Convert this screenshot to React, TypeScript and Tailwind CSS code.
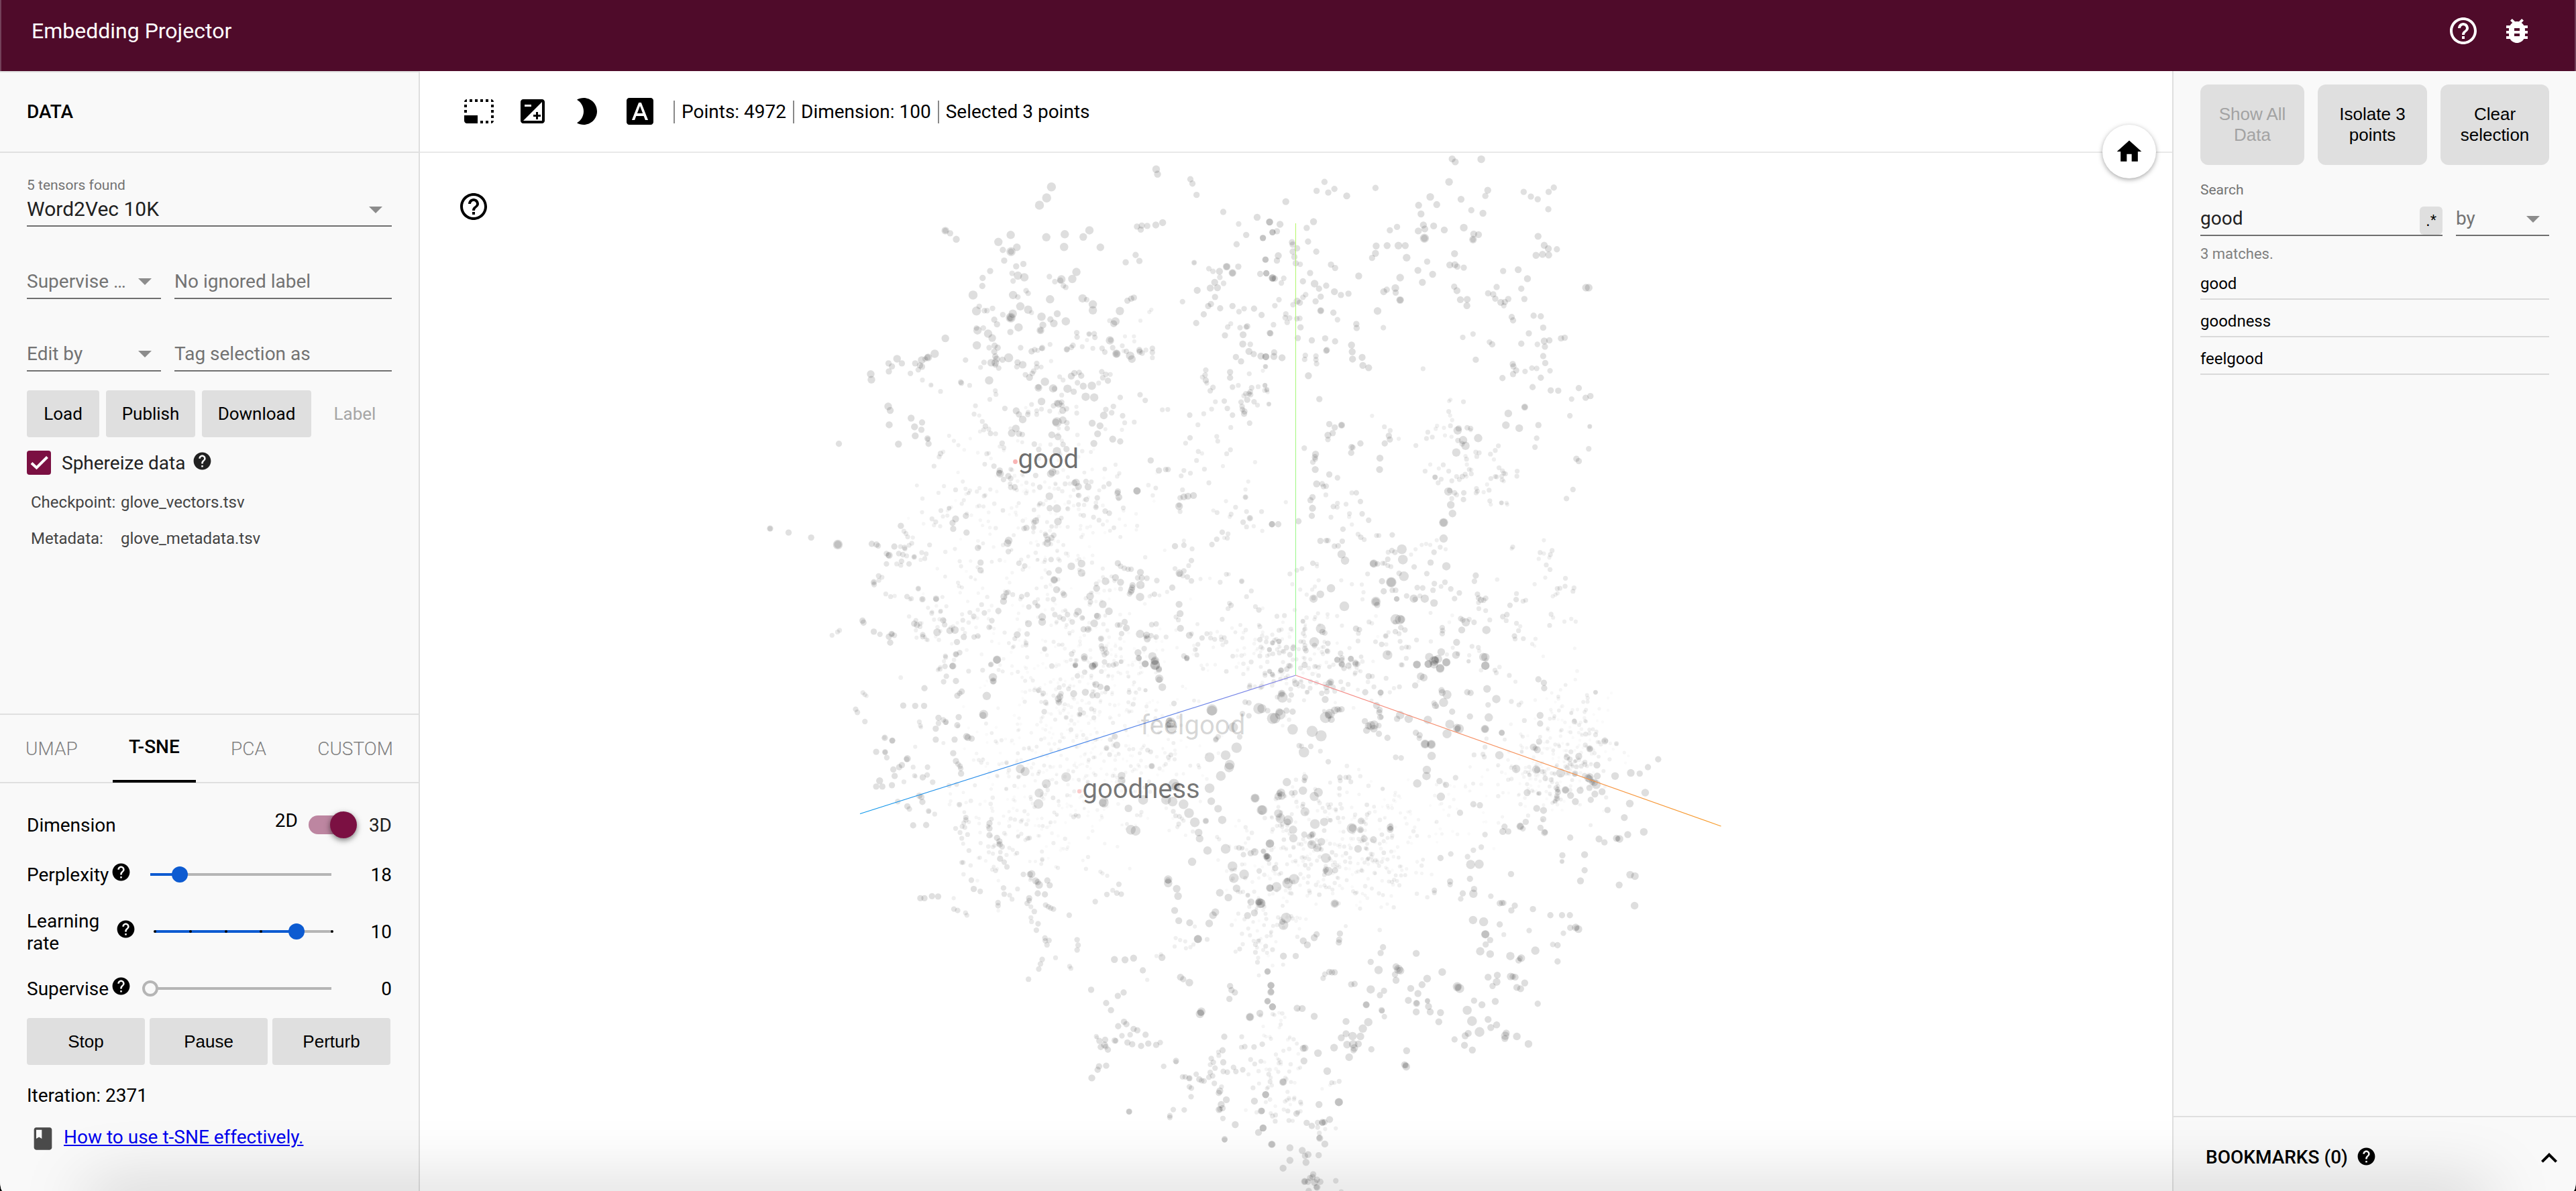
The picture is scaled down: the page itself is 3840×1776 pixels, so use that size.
import React from "react";
import {
  MdArrowDropDown,
  MdBook,
  MdBrightness2,
  MdBugReport,
  MdExpandLess,
  MdExposure,
  MdFontDownload,
  MdHelp,
  MdHelpOutline,
  MdHome,
  MdPhotoSizeSelectSmall,
} from "react-icons/md";

type Point = { x: number; y: number; r: number; o: number };

/* Projected points, stored per tile as "x,y,r" in tile units. */
const TILES: { ox: number; oy: number; sx: number; sy: number; data: string }[] = [
  {
    ox: 1100,
    oy: 220,
    sx: 1.96,
    sy: 2.01,
    data: `1222,65,11 1226,80,10 1322,95,9 1328,108,9 1340,142,9 916,118,13 902,151,13 881,173,13 606,249,11 606,249,8 620,257,9 638,275,10
1166,237,9 1180,234,9 1177,246,9 1196,235,9 1221,232,10 1241,225,10 1418,193,9 1463,229,8 1517,209,10 1553,223,10 1485,262,9 1534,271,9 1562,254,9 1457,290,9
797,262,12 761,283,12 815,299,11 798,312,13 798,312,9 774,307,9 778,339,9 901,269,12 955,260,12 953,298,12 1027,248,12 1009,268,11 1059,299,11 834,349,9 813,356,9
1162,322,9 1173,340,9 1133,344,9 1333,345,8 1333,345,6 1428,357,11 1428,357,9 1445,376,11 1445,376,9 1462,357,9 1376,363,8 1388,371,8 1407,371,10 1408,389,8 1393,404,10 1380,421,10 1401,420,10 1419,407,8 1542,336,9 1526,379,9 1544,377,9 1562,391,11
737,370,9 715,391,9 714,415,9 801,377,8 818,384,12 837,389,12 804,400,8 804,442,12 818,448,8 842,429,8 848,437,8 687,442,13 910,387,8 926,402,8 945,395,12 942,399,9 951,414,8 958,419,8 977,394,12 989,373,12 912,455,12 1007,452,12 1019,456,8 1037,470,12 1037,488,12 1138,459,9 1149,453,9 1157,450,9 1342,428,10 1299,462,8 1394,448,9 1382,469,9 1374,475,9 1361,500,9 1445,475,9 1409,482,9 1464,492,8 1479,483,8 1508,483,9 1530,502,9 1339,526,9
697,490,13 705,476,8 720,489,8 728,489,8 744,482,8 774,501,8 803,498,12 797,510,14 797,510,11 795,512,8 825,476,12 848,486,12 858,495,7 887,507,12 913,515,9 923,527,11 933,498,10 958,521,12 1116,490,12 1103,521,12 1098,528,10 1086,519,7 1202,493,6 1208,486,6 1176,519,6 749,516,9 757,530,9 884,548,11 884,548,8 891,532,10 820,539,12 796,553,9 700,548,12 697,541,8 717,541,8 731,558,12 743,571,11 606,572,11 698,593,12 734,600,8 750,594,9 759,600,9 749,612,9 752,626,9 756,634,10 752,645,11 740,645,11 773,636,9 791,630,13 762,661,8 752,652,8 719,644,8 709,659,7 817,644,9 815,657,8 832,651,11 665,637,8
575,618,12 556,629,11 554,629,9 537,637,11 547,634,8 518,647,9 532,653,9 538,657,9 527,666,8 504,677,8 465,633,11 440,647,9 450,656,9 441,671,9 479,647,9 388,679,11 390,696,11 539,697,7 564,712,7 565,712,5 592,731,7 651,703,8 653,706,8 677,713,7 734,698,12 752,729,7 754,740,7 736,755,7
439,776,11 445,788,10 442,831,10 506,811,10 516,837,10 538,824,9 536,846,9 518,864,10 554,872,9 555,874,7 557,888,9 469,889,10 295,888,9 617,864,6 631,879,6 644,892,6 592,917,8 600,912,6 588,927,7 573,955,7
826,600,8 858,611,9 867,606,8 889,601,9 888,602,7 912,590,7 876,608,7 979,593,8 961,605,9 961,605,7 974,599,8 1006,597,7 990,555,8 991,568,8 1026,559,8 1026,559,6 1041,558,8 1043,569,8 1020,577,6 1087,578,12 1089,577,8 1131,566,6 1157,566,6 1158,581,6 1037,602,7 1064,602,8 1095,600,8 1123,594,7 1106,618,12 1106,618,10 1105,618,6 1072,613,8 1127,610,6 1135,611,8 1146,624,12 1151,634,11 1173,607,9 1174,612,9 1181,616,8 1192,607,7 1211,602,8 1211,614,8 1211,630,7 915,640,6 873,647,8 873,658,8 886,658,7 864,670,8 860,677,8 840,681,8 852,689,10 940,687,7 950,697,7 974,685,10 983,676,9 997,674,8 1003,684,9 1063,672,8 1075,680,8 1088,680,7 1066,690,8 1081,699,9 1054,706,7 992,705,8 897,702,12 878,720,11 878,718,8 921,722,12 925,723,8 963,723,12 981,732,9 1009,715,10 1034,714,12 1041,749,12 1016,747,12 946,742,7 1117,749,8 1175,741,8 1190,758,8 887,761,11 937,768,11 932,766,9 946,763,8 947,773,8 949,788,10 960,783,8 813,789,10 821,800,9 832,815,11 847,800,8 780,782,8 858,770,7 848,793,7 873,789,7 873,800,7 887,784,7 911,790,7 922,774,8 989,777,6 990,796,7 1069,803,11 1075,785,8 1092,795,8 1097,776,8 1124,804,8 1130,825,7 1158,823,7 932,823,14 929,823,10 949,817,11 961,825,8 962,842,8 1035,826,10 1058,834,10 1051,858,10 1040,887,10 1095,874,10 1117,881,9 1122,846,6 694,774,7 690,799,7 705,803,6 714,821,7 723,835,8 718,846,7 733,844,7 738,857,8 753,858,7 812,842,11 800,856,11 821,858,9 831,860,8 917,861,10 935,867,10 866,889,8 772,886,8 765,896,6 777,900,7 727,918,7 733,916,6 748,955,8 765,968,9 763,975,9 766,978,11 776,995,8 790,985,9 797,992,8 797,1018,8 809,1018,9 950,890,8 932,910,12 960,904,9 879,905,8
919,973,11 914,978,11 870,983,8 882,1018,8 988,1004,11 983,1005,9 995,1016,10 1017,1001,8 1023,1017,10 956,1008,7 1166,1029,11 1166,1029,10 1110,1031,9 1109,1036,9 1113,1048,10 1084,1008,8 1069,1017,7 996,1043,8 1018,1055,8 1050,1050,8 910,1045,11 932,1082,12 911,1081,9 935,1121,11 870,1119,10 865,1124,8 864,1139,8 843,1140,9 836,1142,8 1046,1078,8 1073,1090,8 1085,1096,8 1126,1080,7 1055,1117,7 1039,1108,7 1010,1103,7 995,1070,7 964,1083,7 602,1015,6 636,1026,7 657,1001,6 665,1023,6 678,1028,6 706,1021,6 586,1035,6 660,1057,6 723,1042,6 617,1081,7 617,1081,6 593,1088,7 612,1103,6 599,1106,6 636,1113,10 666,1104,9 627,1125,9 629,1143,9 668,1154,9 567,1113,7 578,1122,7 591,1135,6 573,1132,6 538,1093,6 94,1142,9 94,1142,7 148,1154,9 214,1169,9 292,1190,14 292,1190,11 391,1188,9 405,1190,9 410,1194,8 476,1134,9 485,1150,7 491,1157,7 496,1167,7 511,1169,6 457,1196,9 475,1196,7 487,1199,8 508,1186,7 500,1192,7 560,1191,7 434,1217,8 442,1222,10 440,1222,8 434,1248,8 470,1217,8 482,1220,8 493,1224,7 478,1240,8 464,1248,7 476,1252,7 500,1248,8 515,1227,8 515,1227,6 537,1214,7 550,1218,7 546,1232,7 534,1236,6 488,1203,7 1206,938,9 1230,968,9 1250,965,8 1257,965,8 1240,786,7 1256,785,7 1320,802,8 1344,831,7 1361,798,7 1321,870,8 1308,886,7 1399,866,7 1402,880,7 1440,839,7 1345,911,7 1356,917,6 1340,938,7 1322,976,7 1303,968,7 1295,984,7 1363,964,7 1376,1005,7 1439,906,7 1428,918,7 1417,955,6 1511,943,6 1299,1026,7 1292,1050,8 1303,1047,10 1315,1045,10 1331,1043,10 1289,1075,11 1292,1091,7 1289,1072,7
1367,667,8 1365,682,8 1357,688,7 1367,698,9 1370,706,7 1388,719,8 1380,729,8 1395,762,7 1421,760,8 1384,784,7 1430,782,8 1438,673,9 1438,690,9 1445,718,8 1462,713,7 1455,628,9 1470,641,9 1494,678,7 1475,589,10 1497,590,8 1493,611,10 1507,619,9 1528,625,10 1542,627,10 1476,561,10 1488,536,9 1485,538,8 1467,540,8 1431,538,8 1440,528,7 1423,563,9 1554,556,9 1501,720,8 1497,732,8 1493,738,8 1498,741,8 1484,738,8 1478,744,7 1488,756,9 1470,763,8 1508,762,8 1473,776,8 1474,785,8 1480,791,9 1479,798,9 1445,802,8 1518,772,7 1520,717,7 1542,657,7 1551,769,7 1495,826,8 1540,713,7 1545,727,7 1566,626,10
788,1186,11 791,1178,11 790,1211,8 701,1200,9 634,1203,6 648,1240,6 652,1255,6 709,1244,9 709,1267,9 905,1175,9 900,1163,8 923,1162,8 904,1186,11 916,1170,9 898,1158,7 974,1255,11 1004,1247,11 1004,1275,11 937,1267,10 924,1296,11 924,1296,9 909,1275,8 821,1246,8 838,1254,8 915,1235,8 931,1325,10 953,1341,9 950,1336,8 922,1354,8 1029,1345,11 1030,1362,8 1048,1321,10 1047,1308,7 1074,1300,11 1103,1289,10 1118,1303,10 1100,1299,6 1110,1246,9 1118,1255,8 1129,1261,8 1140,1264,8 1149,1264,8 1176,1273,10 1168,1290,8 1180,1290,9 1195,1291,8 1224,1298,8 1176,1311,12 1153,1312,9 1152,1319,9 1150,1326,10 1148,1332,9 1144,1338,8 1118,1323,7 1175,1347,12 1203,1345,6 1217,1339,8 1254,1332,6 1269,1319,9 1247,1207,5 1277,1195,9 1303,1192,8 1303,1178,6 1327,1203,7 1415,1153,8 1399,1174,8 1385,1190,8 1432,1158,7 1430,1171,7 1421,1170,6 1325,1238,8 1317,1253,7 1290,1276,11 1290,1278,8 1303,1269,8 1277,1262,7 1313,1287,8 1325,1299,8 1300,1284,7 1427,1279,7 1434,1279,6 1409,1303,7 1379,1291,5 1472,1300,8 1472,1300,6 1500,1329,7 1486,1346,7 1436,1366,7 1441,1372,8 1432,1382,7 1512,1376,7 1522,1386,8 1415,1414,7 1525,1436,7 1525,1475,8 1528,1497,7 1525,1524,7 1561,1485,7 1553,1505,7 1560,1129,9 1530,1091,7 1486,1091,7 1496,1111,9 1496,1111,6 1476,1123,8 1486,1137,7 1507,1135,6 1532,1149,6 1483,1048,8 1483,1048,6 1483,1025,6 1491,1001,6 1426,1060,6 1454,1078,7 1441,1099,7 1437,1107,6 1389,1088,6 1400,1094,7
411,1284,8 421,1288,7 412,1297,7 397,1303,9 397,1303,6 398,1310,8 432,1338,7 446,1346,7 458,1344,6 494,1346,8 507,1352,7 503,1354,6 527,1322,8 527,1322,6 539,1354,9 539,1354,6 579,1352,9 579,1354,8 643,1304,6 646,1315,6 609,1375,6 712,1370,7 720,1395,8 689,1405,8 761,1389,9 742,1418,8 734,1438,8 738,1438,6 776,1360,10 777,1346,10 784,1335,8 789,1333,8 803,1340,7 829,1346,8 845,1340,8 868,1364,8 850,1377,8 876,1374,8 876,1374,6 889,1407,11 889,1422,11 849,1427,10 926,1400,8 940,1408,8 951,1413,8 963,1400,8 977,1422,8 994,1391,11 988,1400,8 1006,1410,8 1066,1369,11 1084,1390,11 1051,1405,10 1048,1403,8 1041,1426,11 1023,1444,10 1010,1444,9 1061,1472,9 1061,1472,6 1130,1422,9 1116,1431,8 1109,1431,8 1135,1440,10 1121,1457,8 1175,1458,12 1194,1461,10 1196,1473,10 1194,1466,7 1209,1430,8 1222,1428,8 1207,1463,8 1222,1467,8 1251,1467,7 1289,1369,10 1292,1397,10 1293,1441,10 1319,1462,10 1280,1407,7 1287,1416,7 1356,1470,8 1370,1457,7 1381,1470,7 1381,1456,6 1393,1474,7 1413,1475,7 1421,1469,7 1344,1489,7 1336,1505,7 1341,1521,7 1303,1524,8 1311,1530,8 1312,1533,7
364,1418,9 367,1424,9 397,1451,9 415,1459,8 441,1466,9 449,1458,9 450,1458,7 457,1462,8 445,1484,9 515,1427,9 523,1431,9 532,1427,7 532,1436,7 520,1447,6 540,1460,8 540,1466,8 522,1469,6 582,1453,11 619,1448,10 634,1446,11 600,1417,9 602,1417,6 604,1430,8 573,1415,6 589,1414,6 657,1417,7 655,1399,6 640,1482,9 660,1467,9 690,1467,8 701,1464,8 275,1462,7 291,1452,7 297,1447,7 606,1524,7 637,1519,9 637,1519,7 648,1514,8 628,1554,10 591,1557,6 757,1535,12 740,1549,8 816,1460,10 809,1472,7 845,1458,8 842,1485,7 842,1491,7 896,1503,8 896,1503,6 948,1490,6 1012,1526,10 975,1518,8 1062,1494,8 1064,1502,8 1073,1504,8 1071,1520,8 1077,1515,8 1044,1549,9 1036,1554,10 986,1552,8 984,1554,6 1105,1548,8 1084,1552,7 1119,1541,6 1169,1514,10 1187,1502,8 1171,1530,9 1190,1547,10 1211,1525,12 1217,1540,11 1219,1552,14 1230,1562,9`,
  },
  {
    ox: 1880,
    oy: 220,
    sx: 1.96,
    sy: 2.01,
    data: `558,34,10 567,43,10 643,35,11 549,103,11 185,103,9 162,130,9 196,135,9 214,124,9 250,145,10 334,121,9 72,162,10 494,148,11 460,173,10 467,199,10 513,171,10 584,155,10 614,188,9 655,145,9 662,128,10 648,197,10 767,133,9 788,147,9 808,155,9 840,133,9 855,120,9 839,185,9
25,223,10 55,230,10 46,251,9 33,254,9 5,271,9 153,222,10 133,241,9 137,282,9 161,312,9 90,284,9 92,291,9 105,302,9 92,312,9 97,328,9 101,347,9 114,350,8 12,336,9 46,339,9 50,324,10 376,248,9 397,238,9 459,250,10 474,232,10 478,244,10 477,272,13 477,272,10 504,235,10 535,247,10 592,240,11 621,259,10 635,261,10 619,276,11 619,276,8 809,266,10 827,293,10 839,303,10 864,305,9 803,323,10 822,320,10 840,322,10 336,295,10 368,294,10 401,294,11 421,294,10 334,317,10 324,331,9 425,330,11 565,318,10 485,342,9 551,352,10 566,351,10 573,357,9 592,360,9 458,368,10 501,380,10 471,404,10 204,351,9 216,361,9 285,385,10 406,390,11 751,366,10 707,370,9 778,393,10 143,376,9 122,401,9 156,408,11 169,423,9 190,414,9 214,432,10 233,442,9 255,438,9 174,447,9 159,461,9 130,441,8 122,449,8 105,460,10 113,465,9 93,471,8 66,392,8 59,406,8 33,391,10 34,393,8 40,393,9 15,377,9 52,456,8 40,474,8 174,489,10 174,489,8 211,495,9 223,516,8 72,499,8 70,510,8 83,511,8 76,524,8 104,513,8 113,512,8 36,531,8 27,557,9 115,539,9 107,571,9 148,578,9 187,572,9 216,581,9 192,607,9 190,609,9 278,529,9 279,541,9 264,592,10 266,612,10 267,634,10 295,629,10 297,653,10 314,660,10 340,490,11 357,540,8 358,432,10 367,426,9 392,421,11 393,435,9 406,457,11 406,457,9 564,417,9 572,429,10 582,456,10 602,455,10 601,474,10 688,418,9 663,437,9 678,440,9 684,453,9 700,464,10 712,463,9 722,454,9 709,474,8 760,423,9 769,454,9 949,420,11 957,420,11 796,504,9 817,506,9 732,508,9 736,518,9 824,540,9 782,557,9 807,590,8 827,580,10 842,578,9 829,597,9 824,625,9 830,646,9 805,662,8 791,661,8 844,669,8 817,690,9 771,671,8 735,649,9 737,656,9 745,668,9 736,679,9 705,691,9 589,569,8 619,559,8 667,583,8 675,590,9 760,588,9 627,636,9 473,663,7 876,572,9 887,570,9 793,718,9 846,728,9 868,729,9 928,721,9 962,745,9 948,750,9 907,754,8
38,614,9 14,627,10 61,630,10 129,623,8 127,635,8 160,625,8 160,636,8 162,648,8 12,656,7 138,684,10 170,754,9 5,669,6 11,713,7 17,725,7 10,728,7 19,733,6 23,769,6 324,804,6 770,778,10 770,778,8 722,797,11 715,832,11 754,841,11 810,832,9 805,871,8 800,898,8 902,804,8 960,836,7 960,836,6 957,903,8 921,933,9 928,940,9 911,1025,8 892,1052,8 199,829,9 215,839,9 235,832,10 235,832,8 209,856,9 195,862,10 195,875,8 126,901,8 159,919,10 157,928,9 158,934,8 151,943,8 158,965,10 264,898,9 268,899,8 290,887,9 263,915,9 360,837,7 377,848,7 373,864,9 376,875,9 361,887,9 402,873,6 347,931,10 346,965,10 199,980,9 223,990,8 162,1008,10 178,1008,8 182,1016,8 190,1015,8 189,1041,7 150,1048,9 144,1057,9 150,1081,10 148,1104,9 223,1066,7 211,1076,8 222,1078,7 248,1069,7 265,1035,7 278,1035,8 290,1061,8 258,1097,7 257,1107,6 204,1108,7 295,1098,8 314,1117,8 265,1130,6 239,1144,8 237,1180,8 283,1159,7 291,1168,8 301,1175,7 337,1163,7 344,1163,7 383,1161,8 173,1179,9 190,1178,8 195,1178,8 214,1195,8 225,1194,8 235,1219,12 245,1238,12 32,1129,9 50,1129,9 109,1120,9 72,1063,6 549,760,6 553,756,6 591,762,7 548,791,7 552,803,6 558,817,6 574,848,12 577,842,9 553,834,7 534,840,6 514,834,6 510,843,6 487,853,7 483,872,7 500,868,7 537,863,6 556,867,6 452,893,7 602,840,8 612,842,8 612,847,6 590,877,12 597,894,12 587,888,8 575,878,8 634,871,12 570,914,12 597,925,6 600,934,7 601,950,6 627,913,7 637,915,7 630,926,7 670,919,7 684,908,7 693,894,7 680,935,6 494,950,6 532,951,7 519,962,6 479,970,7 548,970,7 508,988,8 508,988,7 526,994,7 517,1005,7 557,999,7 571,986,7 579,995,7 588,986,8 596,979,7 600,986,6 608,965,7 614,966,6 614,978,7 547,1031,12 551,1028,8 565,1035,8 571,1041,7 592,1035,8 591,1055,8 557,1052,7 554,1071,11 559,1097,11 533,1124,13 533,1124,11 533,1172,12 629,1022,7 632,1030,7 628,1035,7 650,1033,6 666,1027,7 660,1010,6 671,992,7 684,986,7 688,987,7 695,960,7 705,969,7 709,976,7 714,978,7 703,985,7 704,996,7 709,1000,6 748,970,7 747,985,7 668,1059,7 671,1070,6 702,1065,7 702,1065,6 717,1065,6 719,1070,6 411,1204,14 414,1235,14 417,1285,14 380,1303,15 380,1303,13 371,1213,7 382,1208,8 391,1213,8 370,1234,8 438,1220,6 451,1204,6 469,1191,6 482,1188,6 494,1191,6 513,1177,6 523,1198,7 539,1204,6 505,1213,8 495,1244,9 541,1255,12 447,1257,8 484,1277,8 329,1247,12 328,1247,10 340,1248,8 355,1246,7 361,1246,7 370,1253,7 379,1256,7 735,1197,7 732,1202,6 826,1177,6 815,1214,7 826,1217,6 811,1233,6 850,1208,7 845,1220,7 842,1229,6 833,1251,7 844,1265,7 830,1289,6 799,1309,6 889,1291,7 888,1315,7 914,1320,7 911,1330,7 873,1321,7 865,1322,7 866,1336,6 860,1340,6 852,1345,6 746,1337,7 745,1355,8 765,1360,7 773,1357,7 727,1372,8 718,1400,8 706,1406,8 716,1418,7 746,1426,7 757,1435,6 752,1448,7 740,1464,8 742,1473,7 766,1472,7 847,1399,7 853,1409,6 886,1421,6 906,1413,6 919,1421,6 792,1488,6 799,1494,5 824,1525,5 916,1501,5
151,1246,8 163,1248,6 163,1255,6 119,1262,7 104,1267,7 84,1278,7 91,1309,6 168,1297,6 204,1321,12 173,1339,11 153,1352,12 153,1350,7 114,1325,6 133,1340,6 149,1325,6 157,1316,6 234,1297,6 265,1309,6 294,1310,6 299,1333,6 296,1354,6 311,1278,7 353,1300,9 358,1330,9 383,1327,8 393,1327,8 403,1276,8 335,1361,14 335,1361,11 339,1371,9 396,1353,8 396,1353,8 425,1344,8 446,1352,12 450,1354,8 464,1344,7 478,1352,12 505,1365,11 456,1319,8 472,1320,8 502,1327,8 506,1307,8 537,1303,8 554,1323,8 579,1335,8 565,1352,8 627,1283,9 623,1300,8 632,1339,8 635,1350,8 642,1356,9 650,1357,8 656,1351,8 635,1364,7 636,1382,7 656,1388,7 668,1416,7 243,1375,14 393,1414,15 405,1415,14 410,1414,11 174,1442,14 179,1452,9 186,1455,8 155,1482,14 156,1493,8 369,1521,14 315,1422,7 277,1442,9 287,1445,8 284,1456,7 236,1433,6 194,1399,6 222,1404,6 166,1396,6 158,1407,6 122,1420,7 122,1420,6 98,1386,6 68,1403,7 46,1405,7 52,1447,7 123,1456,7 52,1480,8 52,1480,7 34,1484,7 195,1486,8 408,1439,8 420,1446,8 392,1451,8 403,1457,7 364,1464,8 364,1464,6 372,1453,6 406,1480,7 424,1497,7 411,1500,7 352,1489,8 454,1476,7 424,1531,7 529,1439,8 530,1448,8 529,1457,8 586,1446,10 598,1423,12 583,1412,8 589,1416,8 608,1414,7 622,1423,8 658,1446,12 571,1483,10 569,1521,11 616,1495,7 526,1512,11 491,1527,12 517,1533,12 508,1537,12 505,1549,12 541,1543,11 489,1548,11 523,1560,12 455,1549,11 649,1527,12 655,1553,12 606,1540,6 608,1522,6 412,1551,7 94,1500,9 74,1499,8 66,1511,7 84,1520,8 53,1515,7 24,1505,7 128,1492,7 128,1502,8 131,1508,8 194,1510,8 232,1516,8 222,1535,8 236,1530,8 235,1547,9 262,1532,8 276,1548,9 282,1548,8 258,1500,6 283,1479,7 327,1540,5 85,1554,8 58,1566,8 242,1561,8`,
  },
  {
    ox: 1100,
    oy: 980,
    sx: 1.96,
    sy: 1.97,
    data: `757,8,11 607,0,7 602,12,6 627,26,9 605,27,8 591,35,7 584,38,6 609,56,8 601,72,8 637,70,9 674,41,7 715,38,7 738,22,7 745,59,12 746,70,10 746,71,8 654,101,9 648,106,8 641,113,9 545,91,9 365,104,7 371,110,7 376,114,6 344,153,8 349,162,8 371,189,8 483,142,9 518,143,9 544,143,9 727,114,12 718,168,13 716,171,10 586,178,9 600,184,8 607,190,9 608,192,7 641,200,9 645,176,9 586,194,8 578,210,9 578,242,9 530,190,7 533,201,7 535,206,6 633,242,9 668,233,10 672,236,10 683,239,9 451,245,9 451,245,8 429,237,9 428,236,6 404,278,9 430,278,8 430,280,8 435,295,8 495,298,10 493,300,8 479,317,9 471,323,9 454,330,9 458,349,9 512,323,7 518,263,6 516,348,7 519,350,6 554,323,8 553,346,8 540,353,9 569,367,8 485,366,7 629,282,9 637,305,9 643,314,8 649,320,8 651,327,8 652,342,9 414,363,10 404,380,9 422,380,9 450,376,9 617,377,7 639,374,7 530,407,9 536,411,9 539,425,9 467,424,8 495,438,9 501,446,8 557,452,8 558,453,6 575,461,7 550,493,9 512,494,9 647,433,8 647,433,5 666,471,8 666,478,8 660,487,7 636,503,7 655,497,7 663,500,7 649,515,7 654,532,7 671,521,7 735,488,9 735,503,9 735,523,9 757,531,9 764,541,9 765,550,9 762,548,7 772,557,8 675,568,7 654,603,7 658,603,7 709,546,6 707,589,6 733,573,6 745,577,6 766,592,9 778,602,8 786,616,8 753,627,7 743,624,6 682,655,8 689,681,9 708,688,8 776,678,8 778,696,8 794,699,7 801,711,7 817,681,7 760,721,8 760,730,8 533,708,9 545,708,9 567,702,9 585,703,9 631,740,8 642,744,8 665,751,7 669,758,7 834,638,8 853,638,9 858,637,11 870,657,10 876,661,9 880,669,11 904,656,9 911,670,9 897,697,9 876,694,9 851,708,9 851,715,8 845,723,8 856,733,7 866,747,8 856,765,7 858,777,7 877,783,8 872,802,8 899,728,8 907,733,8 914,737,8 922,740,8 968,758,8 897,825,8 898,833,8 909,832,8 903,845,8 991,830,8 994,846,8 991,860,8 928,883,7 889,888,8 884,901,8 879,916,8 849,946,8 969,908,7 973,914,7 1032,977,9 1110,995,9 1127,985,9 1076,1016,9 1090,1037,9 1128,1071,9 1135,1078,9 1111,1084,9 1156,1092,9 1167,1096,9 1146,1109,8 1191,1109,9 1122,1112,8 1047,1114,7 1049,1117,6 1056,1127,9 1073,1124,9 1071,1139,10 1075,1144,8 1060,1145,9 1081,1153,9 1101,1126,9 1104,1127,8 1138,1132,9 1152,1137,9 1178,1142,9 1199,1135,9 1222,1139,9 1234,1132,8 1076,1200,9 1055,1202,9 1051,1212,9 1034,1236,10 1143,1335,9 1143,1335,8 1244,1202,8 1280,1186,9 1280,1189,7 1262,1347,8 1262,1352,8 1272,1329,8 1304,1330,8 1319,1262,8 1325,1266,8 1324,1291,8 1299,1233,8 1307,1233,8 1319,1237,9 1319,1237,7 1339,1225,8 1348,1240,9 1355,1244,8 1362,1245,8 1376,1234,8 1387,1230,8 1380,1220,8 1394,1207,8 1389,1190,8 1383,1179,8 1380,1197,7 1404,1160,7 1405,1170,7 1416,1155,9 1418,1190,9 1418,1217,8 1430,1219,8 1448,1205,8 1455,1217,8 1475,1212,8 1421,1115,9 1472,1115,7 1471,1146,7 1481,1144,8 1508,1145,8 1532,1137,8 1436,1004,9 1452,985,9 1442,978,9 1438,966,9 1392,1252,8 1408,1274,10 1405,1280,9 1413,1262,7 1412,1314,10 1416,1325,9 1406,1329,10 1408,1328,8 1427,1300,10 1417,1355,8 1453,1373,10 1422,1416,9 1422,1418,8 1542,1285,10 1509,1304,10 1529,1333,10 1534,1383,10 1521,1396,10 1559,1431,10 1505,1265,7 1498,1182,7 1510,1195,7 1528,1187,7 1354,1041,12 1350,1048,12 1352,1044,10 1496,1057,12 1496,1057,10 1525,1046,10 1548,1010,9 1557,984,10 1557,964,10 1562,1027,10 1547,924,9
1100,888,10 1131,889,10 1156,884,10 1239,882,10 1223,878,6 1236,873,6 1183,920,9 1196,948,6 1293,940,10 1301,946,9 1319,956,11 1344,828,12 1344,828,11 1320,780,10 1288,774,10 1276,744,10 1286,702,11 1282,680,11 1257,653,12 1257,664,12 1257,656,9 1327,601,12 1372,568,12 1349,533,11 1346,515,11 1335,485,14 1318,458,14 1302,432,14 1270,424,14 1251,419,14 1184,419,14 1141,444,11 1069,427,14 1066,428,11 1148,507,14 1162,510,14 1121,348,11 1121,362,11 1274,374,16 1280,380,13 1209,320,9 1209,320,7 1378,294,14 1425,288,14 1457,266,15 1437,316,14 1435,324,14 1411,349,14 1378,385,14 1383,423,11 1403,445,11 1415,478,12 1367,481,9 1367,481,7 1511,414,13 1511,414,11 1530,449,14 1522,151,16 1562,180,16 1385,155,16 1385,157,14 1264,192,15 1267,208,15 1260,186,9 1257,200,9 1447,206,14 1466,234,8 1397,240,8 1396,243,8 1403,234,8 1425,563,14 1464,560,8 1477,580,8 1498,576,9 1510,572,11 1535,570,7 1546,584,9 1554,548,12 1445,614,14 1479,638,14 1449,649,14 1457,679,11 1408,692,11 1433,706,11 1395,749,11 1388,758,11 1377,782,11 1335,791,6 1489,759,10 1509,751,10 1499,719,10 1523,718,11 1526,723,14 1521,720,9 1554,678,11 1523,628,8 1113,667,8 1095,685,7 1107,693,8 1120,696,8 1078,697,8 1044,718,8 1371,829,7 1279,825,6 1292,831,6 1307,835,6 1276,850,6 1309,855,6 1322,852,6 1331,844,6 1520,834,7 1512,844,7 1542,849,7 1562,859,7 1512,867,7 1535,860,6 1520,883,6 1518,896,7 1466,857,7 1454,865,6 1475,843,6 1496,817,6 1443,787,6 1491,797,6 1480,770,6
1219,10,12 1219,22,14 1230,37,9 1231,63,12 1231,66,9 1240,88,11 1190,20,10 1172,3,8 1274,136,8 1312,2,8 1359,34,6 1371,22,5 1495,88,8 1530,86,8 1554,42,7 1562,51,7 1540,53,7 1474,166,8 1482,132,8 1493,134,8 1493,172,8 1036,27,11 1042,24,9 1012,4,9 986,22,8 986,25,7 1013,44,8 992,55,8 1071,14,8 1097,23,8 1120,13,7 1062,42,7 1046,80,10 1059,87,9 1078,91,9 1079,91,8 1050,112,9 1036,112,9 1015,103,10 981,107,10 966,93,7 944,107,8 941,116,10 936,122,10 938,133,9 899,133,8 895,160,8 917,26,8 939,89,7 922,113,6 892,106,8 879,97,8 866,97,6 877,99,6 853,97,5 959,177,7 959,177,5 973,213,7 974,186,6 998,168,8 1000,153,7 1010,164,7 1033,152,7 1040,178,7 1096,193,6 1143,103,7 1155,138,7 1101,233,9 1107,258,10 1077,267,8 1077,268,6 1086,286,7 1088,242,7 825,328,13 839,336,13 959,352,14 901,372,13 880,399,13 878,431,14 784,387,6 784,387,5 820,351,6 808,378,6 818,43,6 838,131,6 995,467,7 981,469,7 961,564,5 922,546,6 889,596,6 1008,597,5 1023,587,6 828,519,6 818,527,6 847,532,7 852,531,7 840,537,6 793,560,6 803,566,6 716,301,6 704,302,6 711,310,6 729,312,5 757,252,5 770,244,6 1059,630,6 1065,635,6 1079,642,6 1017,622,6 935,619,6 1145,621,5 1206,278,7 1197,273,7 1178,270,5 1232,327,6 1250,314,6 1258,294,7 1265,287,7 1276,300,6 1259,302,5 1277,273,5 1272,453,7 1279,466,7 1290,468,7 1288,490,7 1284,499,6 1302,480,6 1297,474,6 1329,512,6 1308,523,5 1260,509,5 1400,528,6 1406,535,6 1464,480,5 1452,624,6`,
  },
  {
    ox: 1880,
    oy: 980,
    sx: 1.96,
    sy: 1.97,
    data: `127,23,9 115,32,7 81,25,8 75,35,8 58,39,8 32,50,7 24,41,7 11,47,7 62,118,15 60,107,11 60,107,8 88,111,8 41,179,15 56,168,15 53,161,11 74,157,9 92,160,9 19,157,8 2,151,13 47,117,7 101,77,10 97,69,7 116,73,7 122,86,7 144,71,7 143,91,7 134,103,7 92,212,15 149,218,16 175,231,16 125,279,15 111,260,8 118,261,7 145,262,8 173,276,7 196,307,8 188,177,16 201,166,14 197,170,11 215,156,11 235,153,9 223,153,9 228,155,8 205,183,10 187,124,10 177,106,8 203,73,10 198,76,9 191,88,9 210,88,8 192,101,8 215,100,7 239,94,7 236,22,9 255,25,9 275,16,9 279,31,6 262,5,9 222,8,9 236,8,8 304,103,9 349,104,9 349,104,8 314,56,9 365,62,7 376,103,6 404,87,7 388,91,6 409,22,7 337,142,10 346,155,9 345,162,9 348,176,9 303,188,9 330,199,13 321,201,13 329,210,11 313,202,10 308,215,10 344,225,9 369,237,9 344,201,8 406,170,12 397,181,9 431,181,12 487,184,12 393,294,8 409,296,8 455,22,11 488,20,11 505,11,14 508,8,10 523,34,12 541,15,12 466,56,11 475,60,11 450,83,9 527,97,9 529,104,10 543,110,13 533,133,13 509,142,10 505,135,8 513,145,7 558,160,9 602,103,9 612,105,9 610,174,9 655,25,12 655,0,12 683,38,7 687,46,7 606,12,6 660,93,11 663,140,8 687,123,12 665,177,12 654,211,12 654,211,10 703,222,9 703,222,8 551,197,13 543,225,13 572,208,12 579,210,13 573,210,9 452,222,9 463,229,9 462,238,8 479,255,13 479,255,11 497,256,13 497,256,11 498,290,12 484,331,12 483,349,12 456,371,12 521,364,9 540,375,9 568,354,8 525,410,12 622,287,7 648,285,7 652,293,7 654,264,7 696,288,12 745,328,12 777,398,10 804,330,12 806,331,9 810,65,9 826,75,9 827,91,9 815,171,10 815,195,9 812,248,9 795,264,10 807,272,10 801,268,8 731,130,7 753,140,7 760,133,6 769,186,7 743,72,6 805,444,10 825,450,10 824,476,9 816,501,9 828,515,10 829,514,8 773,484,9 757,497,11 757,497,9 765,504,8 711,498,9 706,512,10 722,512,9 620,432,9 639,435,9 581,457,9 654,521,8 643,558,8 620,567,8 603,586,8 554,578,8 524,590,9 612,609,13 637,608,13 610,651,9 552,659,9 552,668,8 730,637,9 506,685,8 506,692,7 589,694,9 583,710,8 622,681,9 620,695,12 671,702,8 697,723,9 704,722,9 709,722,8 741,730,9 731,744,9 794,740,9 845,758,9 879,758,9 902,758,9 903,795,9 919,794,11 927,799,11 921,795,8 883,811,8 852,844,8 866,846,9 866,894,9 783,803,8 697,785,9 709,815,7 650,777,13 619,772,12 655,814,12 655,814,11 669,831,9 656,844,9 640,864,12 669,872,11 728,878,12 760,884,11 752,891,9 756,885,8 801,862,12 663,940,10 690,934,10 729,938,11 742,940,10 735,938,9 688,954,11 676,966,9 770,957,10 747,970,10 758,974,10 808,1018,9 622,1009,9 645,1021,10 684,1011,10 602,1037,13 616,1069,14 638,1101,14 663,1064,10 671,1088,10 688,1080,10 605,1105,10 596,1112,10 565,1123,9 594,1140,10 617,1154,10 716,1104,10 713,1112,12 712,1120,10 747,1114,11 781,1136,11
1160,300,9 1130,323,9 1080,340,11 1106,342,9 1122,398,11 1077,430,11 1061,471,10 1034,349,11 1012,449,9 1004,246,10 977,103,7 977,103,6 954,120,6 928,291,10 981,317,10 960,269,10 960,269,8 987,534,10 1003,544,9 1038,532,10 1047,534,11 1042,533,8 1071,521,10 1118,513,11 903,530,9 880,582,9 879,600,7 879,600,6 945,580,10 945,626,9 933,657,10 1078,639,11 1092,643,11 1046,669,10 1091,730,11 862,384,8 866,389,8 867,397,9 864,408,8 864,415,9 859,423,7 889,390,11 889,390,9 904,406,10 918,424,10 932,391,10 963,419,9 975,402,10 996,395,10 1008,412,6 955,355,11 959,358,11 961,351,10 979,374,13 973,368,11 982,349,10 959,384,9 967,367,9 945,348,8 917,342,9 916,344,7 875,340,13 893,294,9 902,300,8 903,313,7 894,325,7 905,278,7 948,226,7 977,228,7 947,258,7 959,213,6 915,189,8 915,186,6 906,164,6 906,164,5 1038,254,7 1038,255,5 1020,253,5 1061,280,5 946,308,7 946,315,7 921,322,7 935,320,7 1018,300,6 974,282,6 812,400,7 812,400,6 830,356,8 847,360,7 850,367,6 849,341,6 821,336,7 777,373,6 772,337,6
75,367,12 122,392,12 167,397,13 155,409,13 128,353,9 126,362,8 127,363,6 89,399,8 99,398,8 58,398,12 60,407,12 50,409,11 53,400,9 128,454,13 50,459,12 56,473,14 79,479,14 4,449,14 77,484,10 93,507,12 94,532,12 26,547,12 157,490,14 184,484,12 126,521,9 147,522,9 141,527,8 151,520,9 148,550,13 164,560,12 176,542,11 189,590,14 196,629,13 189,624,9 187,628,8 216,626,9 265,503,15 267,502,11 290,507,10 292,481,10 301,533,10 328,536,10 283,563,11 377,499,10 377,506,10 378,503,8 41,620,9 7,570,8 17,585,9 20,590,11 14,586,9 96,652,15 77,664,15 76,658,9 45,675,14 26,678,10 0,723,13 73,766,15 65,787,14 62,777,9 215,724,12 215,724,9 123,833,10 135,845,10 155,824,10 162,814,9 227,838,9 228,830,9 230,812,9 65,878,10 101,878,9 19,923,9 29,964,10 29,983,9 18,1011,9 33,1027,10 105,1031,10 120,1032,10 155,1055,10 181,943,8 186,931,8 199,925,9 207,926,9 215,926,9 263,961,9 273,960,9 230,353,8 231,363,7 247,353,7 256,353,8 262,366,7 229,405,6 286,403,5 316,457,6 349,869,9 356,852,9 320,895,9 453,870,10 343,919,12 320,976,12 359,980,9 347,993,9 394,909,10 401,917,13 407,921,11 391,932,9 394,949,10 400,917,8 529,925,11 485,944,11 470,962,10 437,973,10 458,988,10 430,1008,10 454,1017,10 454,1016,8 486,1010,8 489,1026,10 494,1042,10 453,1042,10 486,1009,7 524,1044,10 519,1071,10 573,968,13 580,973,13 574,969,10 307,1021,10 307,1021,9 352,1037,9 353,1039,8 360,1056,8 248,1070,10 313,1072,12 297,1091,12 267,1113,12 290,1114,11 248,1106,10 234,1118,10 251,1138,11 269,1137,12 284,1136,10 272,1148,11 270,1155,9 257,1175,11 213,1147,11 166,1163,11 322,1152,9 425,1156,10 419,1197,10 424,1203,11 422,1199,9 123,1149,10 128,1148,10 125,1186,10 193,1216,11 64,1248,11 64,1248,9 13,1285,10 227,1307,12 227,1307,11 169,1314,10 200,1358,10 179,1366,10 179,1368,9 185,1366,9 165,1367,8 133,1368,9 148,1377,9 165,1381,7 187,1386,6 170,1398,7 171,1413,10 170,1412,8 186,1430,10 228,1246,7 214,1250,6 206,1250,7 201,1257,5 178,1268,5 218,1384,6 32,1431,10 84,1441,10 84,1478,10 64,1501,10 120,1449,10 128,1465,9 137,1461,10 131,1484,10 168,1463,9 152,1519,9 150,1527,9 143,1530,9 127,1540,10 127,1540,8 137,1541,9 156,1543,10 163,1535,9 173,1541,9 163,1557,10 162,1557,8 218,1538,8 234,1570,7 139,1568,9 97,1294,6 115,1307,7 117,1313,6 103,1341,9 107,1337,7 115,1334,6 75,1301,6 66,1329,6 78,1333,7 42,1345,7 33,1348,7 41,1363,7 28,1340,6 2,1333,9 6,1383,10 81,1361,7 92,1362,6 52,1183,6 51,1193,6 65,1156,6 43,1167,6 82,1217,6 50,1218,6 25,1212,6 22,1225,7 28,1235,6 26,1247,7 74,1240,6 77,1277,6 17,1267,6 69,1058,5 57,1079,6 53,1088,5 58,1067,5`,
  },
];

/* Soft background population: [centre x, centre y, spread x, spread y, count, min r, max r]. */
const CLUSTERS: [number, number, number, number, number, number, number][] = [
  [1560, 720, 90, 60, 120, 2.4, 3.5],
  [1540, 840, 110, 90, 180, 2.3, 3.3],
  [1610, 1000, 120, 110, 240, 2.1, 3.1],
  [1590, 1160, 120, 75, 270, 2.1, 3.1],
  [1660, 1080, 100, 90, 150, 2, 3],
  [1500, 1240, 60, 70, 70, 2.4, 3.5],
  [1410, 940, 60, 60, 34, 2.6, 3.7],
  [1880, 960, 70, 40, 60, 2.4, 3.5],
  [1960, 1000, 90, 50, 100, 2.4, 3.7],
  [1960, 1270, 85, 70, 230, 2.4, 3.5],
  [2040, 1280, 65, 50, 120, 2.4, 3.3],
  [1890, 1370, 40, 60, 66, 2.4, 3.3],
  [1905, 1580, 30, 60, 46, 2.6, 3.4],
  [2130, 1210, 70, 40, 60, 2, 2.9],
  [2330, 1110, 60, 60, 150, 2.1, 3.1],
  [2290, 1160, 60, 40, 120, 2.2, 3.2],
  [2200, 940, 90, 60, 20, 2.8, 3.7],
];

function opacityFor(r: number) {
  if (r >= 4.9) return 0.13;
  if (r >= 4.2) return 0.12;
  if (r >= 3.8) return 0.105;
  if (r >= 3.4) return 0.088;
  if (r >= 2.9) return 0.062;
  if (r >= 2.5) return 0.04;
  return 0.02;
}

function buildPoints(): Point[] {
  const points: Point[] = [];
  for (const tile of TILES) {
    for (const token of tile.data.trim().split(/\s+/)) {
      const [x, y, size] = token.split(",").map(Number);
      const r = size / 1.92;
      points.push({ x: tile.ox + x / tile.sx, y: tile.oy + y / tile.sy, r, o: opacityFor(r) });
    }
  }
  let seed = 4972;
  const random = () => {
    seed = (seed * 1664525 + 1013904223) % 4294967296;
    return seed / 4294967296;
  };
  const normal = () => (random() + random() + random() - 1.5) * 1.4;
  for (const [cx, cy, sx, sy, count, min, max] of CLUSTERS) {
    for (let i = 0; i < count; i++) {
      const r = min + random() * (max - min);
      points.push({ x: cx + normal() * sx, y: cy + normal() * sy, r, o: opacityFor(r) });
    }
  }
  return points;
}

const POINTS = buildPoints();

function Scatter() {
  return (
    <svg className="block h-full w-full" viewBox="626 228 2612 1548" fill="black">
      <defs>
        <linearGradient id="axis-y" gradientUnits="userSpaceOnUse" x1="0" y1="333" x2="0" y2="1007">
          <stop offset="0" stopColor="#b4f765" />
          <stop offset="1" stopColor="#8df795" />
        </linearGradient>
        <linearGradient id="axis-z" gradientUnits="userSpaceOnUse" x1="1931" y1="0" x2="1282" y2="0">
          <stop offset="0" stopColor="#8a86e6" />
          <stop offset="0.5" stopColor="#4585ea" />
          <stop offset="1" stopColor="#0a97ea" />
        </linearGradient>
        <linearGradient id="axis-x" gradientUnits="userSpaceOnUse" x1="1931" y1="0" x2="2566" y2="0">
          <stop offset="0" stopColor="#f58a94" />
          <stop offset="1" stopColor="#f79a26" />
        </linearGradient>
      </defs>
      {POINTS.map((p, i) => (
        <circle key={i} cx={p.x} cy={p.y} r={p.r} fillOpacity={p.o} />
      ))}
      <rect x="1931" y="333" width="1" height="674" fill="url(#axis-y)" />
      <path d="M1931.5 1007L1282 1213.5" stroke="url(#axis-z)" strokeWidth="1.2" />
      <path d="M1931.5 1007L2565.5 1232" stroke="url(#axis-x)" strokeWidth="1.2" />
      <circle cx="1513.5" cy="688.5" r="3.4" fill="#f9b4b4" />
      <circle cx="1609" cy="1180" r="3.2" fill="#fbcaca" />
      <g fontSize="40">
        <text x="1700" y="1095" fillOpacity="0.18">feelgood</text>
        <text x="1517.5" y="697.5" fillOpacity="0.58">good</text>
        <text x="1613.5" y="1189.5" fillOpacity="0.53">goodness</text>
      </g>
    </svg>
  );
}

function SelectField({ text, className, tone }: { text: string; className: string; tone: string }) {
  return (
    <div className={`flex items-center justify-between border-b-2 border-[#6f6f6f] ${className}`}>
      <span className={`whitespace-nowrap ${tone}`}>{text}</span>
      <MdArrowDropDown className="size-12 shrink-0 text-[#8c8c8c]" />
    </div>
  );
}

function FlatButton({ children, className }: { children: React.ReactNode; className: string }) {
  return (
    <button className={`flex items-center justify-center rounded bg-[#dfdfdf] text-[26px] text-black ${className}`}>
      {children}
    </button>
  );
}

function SliderRow({
  label,
  value,
  position,
  ticks,
  className,
}: {
  label: string;
  value: string;
  position: number;
  ticks?: number;
  className: string;
}) {
  return (
    <div className={`flex items-center ${className}`}>
      <span className={ticks ? "w-[132px] pt-0.5 leading-[33px]" : "w-[125px] pt-0.5"}>{label}</span>
      <MdHelp className="mb-2 size-[31px] shrink-0" />
      <div className={`relative ml-[28px] h-1 shrink-0 bg-[#b5b5b5] ${ticks ? "w-[264px]" : "w-[270px]"}`}>
        <div className="h-1 bg-[#0d5bd1]" style={{ width: `${position}%` }} />
        {ticks &&
          Array.from({ length: ticks }, (_, i) => (
            <span
              key={i}
              className="absolute top-0 size-1 -translate-x-1/2 rounded-full bg-black"
              style={{ left: `${(i * 100) / (ticks - 1)}%` }}
            />
          ))}
        <span
          className={`absolute top-1/2 size-6 -translate-1/2 rounded-full ${
            position === 0 ? "border-4 border-[#b5b5b5] bg-[#f9f9f9]" : "bg-[#0d5bd1]"
          }`}
          style={{ left: `${position}%` }}
        />
      </div>
      <span className="ml-auto pt-0.5">{value}</span>
    </div>
  );
}

function LeftPanel() {
  return (
    <aside className="flex w-[626px] shrink-0 flex-col border-r-2 border-[#dfdfdf] bg-[#f9f9f9]">
      <h2 className="flex h-[122px] items-center border-y-2 border-[#e0e0e0] pl-10 text-[28px] font-medium">DATA</h2>
      <section className="flex grow flex-col px-10 pt-9">
        <div className="flex h-6 items-center pt-0.5 text-[21px] text-[#737373]">5 tensors found</div>
        <SelectField text="Word2Vec 10K" className="h-[50px] text-[30px]" tone="pb-0.5 text-[#212121]" />
        <div className="mt-14 flex gap-5">
          <SelectField text="Supervise …" className="h-[52px] w-[200px]" tone="pt-0.5 text-[#737373]" />
          <div className="flex h-[52px] grow items-center border-b-2 border-[#6f6f6f] pt-0.5 text-[#737373]">
            No ignored label
          </div>
        </div>
        <div className="mt-14 flex gap-5">
          <SelectField text="Edit by" className="h-[52px] w-[200px]" tone="pt-0.5 text-[#737373]" />
          <div className="flex h-[52px] grow items-center border-b-2 border-[#6f6f6f] pt-0.5 text-[#737373]">
            Tag selection as
          </div>
        </div>
        <div className="mt-7 flex h-[70px] gap-2.5">
          <FlatButton className="w-[108px]">Load</FlatButton>
          <FlatButton className="w-[133px]">Publish</FlatButton>
          <FlatButton className="w-[163px]">Download</FlatButton>
          <span className="flex w-[110px] items-center justify-center text-[26px] text-[#a6a6a6]">Label</span>
        </div>
        <label className="mt-5 flex h-9 items-center text-[#212121]">
          <span className="flex size-9 items-center justify-center rounded bg-[#7b1042]">
            <svg viewBox="0 0 36 36" className="size-9" fill="none" stroke="white" strokeWidth="4">
              <path d="M7 18.5L14.5 25.5L30.5 9.5" />
            </svg>
          </span>
          <span className="ml-4 pt-0.5">Sphereize data</span>
          <MdHelp className="mb-1.5 ml-[10px] size-[31px]" />
        </label>
        <div className="mt-[14px] grid grid-cols-[134px_auto] pl-1.5 text-2xl leading-[54px] text-[#444444]">
          <span>Checkpoint:</span>
          <span>glove_vectors.tsv</span>
          <span>Metadata:</span>
          <span>glove_metadata.tsv</span>
        </div>
      </section>
      <nav className="flex h-[104px] justify-between border-y-2 border-[#e0e0e0] px-[14px] text-[#808080]">
        <span className="flex items-center px-6 pt-px font-light">UMAP</span>
        <span className="relative flex items-center px-6 pb-1 font-medium text-black">
          T-SNE
          <span className="absolute inset-x-0 -bottom-px h-1 bg-black" />
        </span>
        <span className="flex items-center px-6 pt-px font-light">PCA</span>
        <span className="flex items-center px-6 pt-px font-light">CUSTOM</span>
      </nav>
      <section className="h-[608px] px-10 pt-8">
        <div className="flex h-[60px] items-center">
          <span className="pt-0.5">Dimension</span>
          <span className="mb-3 ml-auto">2D</span>
          <span className="relative ml-4 h-7 w-[70px] rounded-full bg-[#bd86a1]">
            <span className="absolute -top-1.5 -right-0.5 size-10 rounded-full bg-[#7b1042] shadow-[0_3px_8px_rgba(0,0,0,0.5)]" />
          </span>
          <span className="ml-5 pt-0.5 text-[#212121]">3D</span>
        </div>
        <SliderRow label="Perplexity" value="18" position={16.3} className="mt-6 h-10" />
        <SliderRow label="Learning rate" value="10" position={79.8} ticks={6} className="mt-8 h-[66px]" />
        <SliderRow label="Supervise" value="0" position={0} className="mt-8 h-10" />
        <div className="mt-6 flex h-[70px] gap-[7px] font-['Liberation_Sans',Arial,sans-serif]">
          <FlatButton className="w-44">Stop</FlatButton>
          <FlatButton className="w-44">Pause</FlatButton>
          <FlatButton className="w-44">Perturb</FlatButton>
        </div>
        <div className="mt-[26px] flex h-10 items-center">Iteration: 2371</div>
        <div className="mt-6 flex h-10 items-center">
          <MdBook className="ml-1 size-10 text-[#4a4a4a]" />
          <a className="mb-1 ml-[11px] text-[#0000ee] underline">How to use t-SNE effectively.</a>
        </div>
      </section>
    </aside>
  );
}

function CenterPanel() {
  return (
    <main className="relative flex grow flex-col bg-white">
      <div className="flex h-[122px] items-center border-b-2 border-[#e9e9e9] pl-16">
        <MdPhotoSizeSelectSmall className="size-12" />
        <MdExposure className="ml-8 size-12" />
        <MdBrightness2 className="ml-8 size-12" />
        <MdFontDownload className="ml-8 size-12" />
        <div className="ml-[26px] flex pt-0.5 leading-[34px]">
          <span className="border-l-2 border-[#888888] px-[10px]">Points: 4972</span>
          <span className="border-l-2 border-[#888888] px-[10px]">Dimension: 100</span>
          <span className="border-l-2 border-[#888888] px-[10px]">Selected 3 points</span>
        </div>
      </div>
      <div className="h-[1548px]">
        <Scatter />
      </div>
      <MdHelpOutline className="absolute top-[178px] left-14 size-12" />
      <span className="absolute top-20 right-[24px] flex size-20 items-center justify-center rounded-full bg-white shadow-[0_2px_7px_rgba(0,0,0,0.35)]">
        <MdHome className="size-11" />
      </span>
    </main>
  );
}

function RightPanel() {
  return (
    <aside className="flex w-[602px] shrink-0 flex-col border-l-2 border-[#dfdfdf] bg-[#f9f9f9]">
      <div className="grow px-10 pt-5">
        <div className="flex h-[120px] gap-5 text-center font-['Liberation_Sans',Arial,sans-serif] text-[26px] leading-[31px]">
          <button className="w-[155px] rounded-xl bg-[#dfdfdf] text-[#a3a3a3]">Show All<br />Data</button>
          <button className="w-[163px] rounded-xl bg-[#dfdfdf]">Isolate 3<br />points</button>
          <button className="w-[162px] rounded-xl bg-[#dfdfdf]">Clear<br />selection</button>
        </div>
        <div className="mt-[26px] flex h-6 items-center text-[21px] text-[#737373]">Search</div>
        <div className="mt-1.5 flex gap-5">
          <div className="flex h-[50px] w-[361px] items-center justify-between border-b-2 border-[#6f6f6f] text-[#212121]">
            good
            <span className="mt-1.5 flex h-[42px] w-[34px] items-center justify-center rounded-md bg-[#dfdfdf] font-['Liberation_Sans',Arial,sans-serif] text-[24px] text-black">
              .*
            </span>
          </div>
          <SelectField text="by" className="h-[50px] grow" tone="text-[#737373]" />
        </div>
        <div className="mt-[14px] flex h-6 items-center text-[22px] text-[#808080]">3 matches.</div>
        <ul className="mt-px text-2xl">
          <li className="flex h-14 items-center border-b-2 border-[#d9d9d9] pt-[10px]">good</li>
          <li className="flex h-14 items-center border-b-2 border-[#d9d9d9] pt-[10px]">goodness</li>
          <li className="flex h-14 items-center border-b-2 border-[#d9d9d9] pt-[10px]">feelgood</li>
        </ul>
      </div>
      <div className="flex h-28 items-center border-t-2 border-[#dfdfdf] pt-2 pr-4 pl-[48px]">
        <span className="pt-0.5 font-medium">BOOKMARKS (0)</span>
        <MdHelp className="mb-0.5 ml-3 size-[31px]" />
        <MdExpandLess className="mt-1 ml-auto size-12" />
      </div>
    </aside>
  );
}

export default function App() {
  return (
    <div className="bg-black">
      <div className="relative flex h-[1776px] w-[3840px] flex-col overflow-hidden [border-bottom-left-radius:4px_16px] [border-bottom-right-radius:4px_16px] bg-[#f9f9f9] font-[Roboto,'Liberation_Sans',sans-serif] text-[28px] text-black">
        <header className="flex h-[106px] shrink-0 items-start border-x-2 border-[#73405a] bg-[#4f0b2a] pt-[22px] pl-[45px] text-white">
          <h1 className="flex h-12 items-center text-[32px]">Embedding Projector</h1>
          <MdHelpOutline className="ml-auto size-12" />
          <MdBugReport className="mr-[62px] ml-8 size-12" />
        </header>
        <div className="flex grow">
          <LeftPanel />
          <CenterPanel />
          <RightPanel />
        </div>
        <div className="pointer-events-none absolute right-[130px] -bottom-10 left-[130px] h-10 shadow-[0_0_100px_rgba(0,0,0,0.27)]" />
      </div>
    </div>
  );
}
